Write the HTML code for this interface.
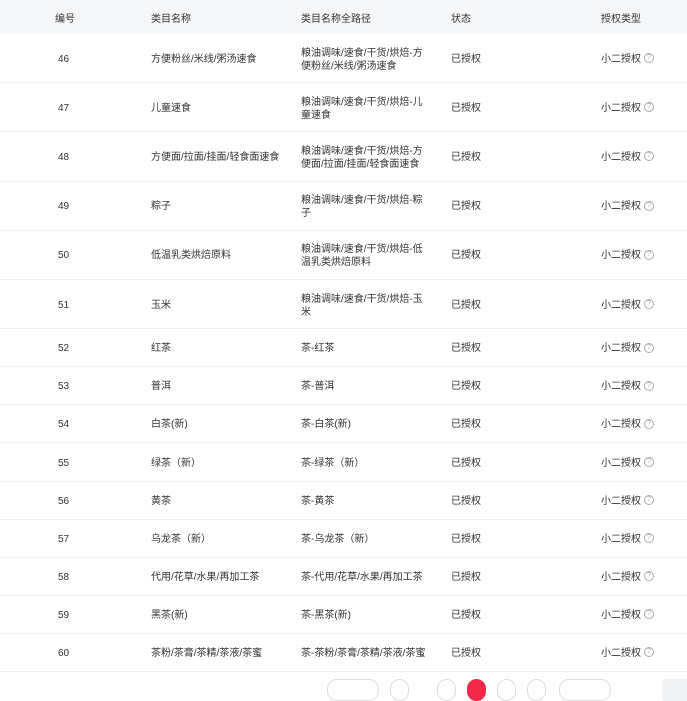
<!DOCTYPE html>
<html><head><meta charset="utf-8"><style>
body{margin:0;width:687px;height:682px;overflow:hidden;background:#fff;font-family:"Liberation Sans","Noto Sans CJK SC",sans-serif;font-size:10px;color:#333;position:relative}
.hd{position:absolute;left:0;top:0;width:687px;height:34px;background:#f5f6f8}
.c{position:absolute;line-height:13px}
.row{position:absolute;left:0;width:687px;border-bottom:1px solid #eef0f3}
.q{display:inline-block;width:8px;height:8px;border:1px solid #aaa;border-radius:50%;font-size:7px;line-height:8px;text-align:center;color:#aaa;margin-left:3px;position:relative;top:-1px;vertical-align:middle}
.p{position:absolute;top:679px;height:20px;border:1px solid #ddd;border-radius:10px;background:#fff}
</style></head><body>
<div class="hd"></div>
<div class="c" style="left:55px;top:13px">编号</div>
<div class="c" style="left:151px;top:13px">类目名称</div>
<div class="c" style="left:301px;top:13px">类目名称全路径</div>
<div class="c" style="left:451px;top:13px">状态</div>
<div class="c" style="left:601px;top:13px">授权类型</div>
<div id="rows"></div>
<script>
var d=[["46","方便粉丝/米线/粥汤速食","粮油调味/速食/干货/烘焙-方<br>便粉丝/米线/粥汤速食"],["47","儿童速食","粮油调味/速食/干货/烘焙-儿<br>童速食"],["48","方便面/拉面/挂面/轻食面速食","粮油调味/速食/干货/烘焙-方<br>便面/拉面/挂面/轻食面速食"],["49","粽子","粮油调味/速食/干货/烘焙-粽<br>子"],["50","低温乳类烘焙原料","粮油调味/速食/干货/烘焙-低<br>温乳类烘焙原料"],["51","玉米","粮油调味/速食/干货/烘焙-玉<br>米"],["52","红茶","茶-红茶"],["53","普洱","茶-普洱"],["54","白茶(新)","茶-白茶(新)"],["55","绿茶（新）","茶-绿茶（新）"],["56","黄茶","茶-黄茶"],["57","乌龙茶（新）","茶-乌龙茶（新）"],["58","代用/花草/水果/再加工茶","茶-代用/花草/水果/再加工茶"],["59","黑茶(新)","茶-黑茶(新)"],["60","茶粉/茶膏/茶精/茶液/茶蜜","茶-茶粉/茶膏/茶精/茶液/茶蜜"]];
var h="",y=34;
d.forEach(function(r,i){var H=i<6?49.2:38.1;var m=y+H/2;
h+='<div class="row" style="top:'+y+'px;height:'+(H-1)+'px"></div>';
h+='<div class="c" style="left:58px;top:'+(m-6)+'px">'+r[0]+'</div>';
h+='<div class="c" style="left:151px;top:'+(m-6)+'px">'+r[1]+'</div>';
var two=r[2].indexOf("<br>")>0;
h+='<div class="c" style="left:301px;top:'+(m-(two?12:6))+'px">'+r[2]+'</div>';
h+='<div class="c" style="left:451px;top:'+(m-6)+'px">已授权</div>';
h+='<div class="c" style="left:601px;top:'+(m-6)+'px">小二授权<span class="q">?</span></div>';
y+=H;});
document.getElementById("rows").innerHTML=h;
</script>
<div class="p" style="left:327px;width:50px"></div>
<div class="p" style="left:390px;width:17px"></div>
<div class="p" style="left:437px;width:17px"></div>
<div class="p" style="left:467px;width:17px;background:#f5284a;border-color:#f5284a"></div>
<div class="p" style="left:497px;width:17px"></div>
<div class="p" style="left:527px;width:17px"></div>
<div class="p" style="left:559px;width:50px"></div>
<div class="p" style="left:662px;width:30px;border-radius:3px;background:#f2f3f5;border-color:#f2f3f5"></div>
</body></html>
